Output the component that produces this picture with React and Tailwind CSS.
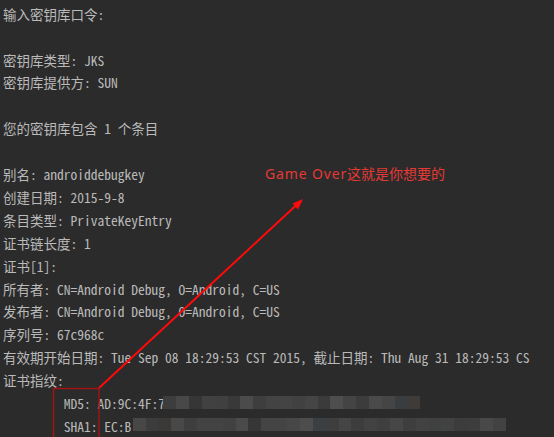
import React from "react";

const lines = [
  "输入密钥库口令:",
  "",
  "密钥库类型: JKS",
  "密钥库提供方: SUN",
  "",
  "您的密钥库包含 1 个条目",
  "",
  "别名: androiddebugkey",
  "创建日期: 2015-9-8",
  "条目类型: PrivateKeyEntry",
  "证书链长度: 1",
  "证书[1]:",
  "所有者: CN=Android Debug, O=Android, C=US",
  "发布者: CN=Android Debug, O=Android, C=US",
  "序列号: 67c968c",
  "有效期开始日期: Tue Sep 08 18:29:53 CST 2015, 截止日期: Thu Aug 31 18:29:53 CS",
  "证书指纹:",
];

const row1 = [
  "bg-[#3d3d3d]", "bg-[#484848]", "bg-[#363636]", "bg-[#414141]", "bg-[#404040]",
  "bg-[#393939]", "bg-[#4b4b4b]", "bg-[#3e3e3e]", "bg-[#434343]", "bg-[#444444]",
  "bg-[#414141]", "bg-[#454545]", "bg-[#3b3b3b]", "bg-[#4e4e4e]", "bg-[#444444]",
  "bg-[#3c3c3c]", "bg-[#4a4a4a]", "bg-[#454545]", "bg-[#3a3d40]", "bg-[#3f3b38]",
];

const row2 = [
  "bg-[#474747]", "bg-[#3c3c3c]", "bg-[#3a3937]", "bg-[#484848]", "bg-[#3e3e3e]",
  "bg-[#434343]", "bg-[#434343]", "bg-[#414141]", "bg-[#4a4a4a]", "bg-[#363636]",
  "bg-[#444444]", "bg-[#444444]", "bg-[#474747]", "bg-[#4d4d4d]", "bg-[#3b3e42]",
  "bg-[#3e3e3e]", "bg-[#454545]", "bg-[#3d3d3d]", "bg-[#424242]", "bg-[#3f3f3f]",
  "bg-[#464646]", "bg-[#3e3e3e]", "bg-[#424242]", "bg-[#404040]", "bg-[#404244]",
  "bg-[#3c3c3c]", "bg-[#3d3d3d]", "bg-[#484848]", "bg-[#424242]",
];

function Mosaic({ blocks }) {
  return (
    <span className="inline-flex h-[13px] align-middle -translate-y-[1px]">
      {blocks.map((c, i) => (
        <span key={i} className={`block h-full w-[12.87px] ${c}`} />
      ))}
    </span>
  );
}

function Line({ children }) {
  return (
    <div className="flex h-[22.9px] items-center whitespace-pre">{children}</div>
  );
}

export default function App() {
  return (
    <div className="relative h-[437px] w-[554px] overflow-hidden bg-[#2b2b2b]">
      <div className="pl-[3px] pt-[2.5px] font-['Noto_Sans_CJK_SC',sans-serif] text-[13.5px] text-[#bababa] [font-feature-settings:'hwid']">
        {lines.map((l, i) => (
          <Line key={i}>{l}</Line>
        ))}
        <Line>
          {"         MD5: AD:9C:4F:"}
          <span className="inline-block w-[5px] overflow-hidden">7</span>
          <Mosaic blocks={row1} />
        </Line>
        <Line>
          {"         SHA1: EC:B"}
          <span className="inline-block w-[1.5px]" />
          <Mosaic blocks={row2} />
        </Line>
      </div>

      <div className="absolute left-[265px] top-[162px] text-[14px] leading-[22px] text-[#e53935]">
        <span className="font-['Noto_Sans',sans-serif] tracking-[0.85px]">Game Over</span>
        <span className="font-['Noto_Sans_CJK_SC',sans-serif]">这就是你想要的</span>
      </div>

      <svg
        className="pointer-events-none absolute left-0 top-0"
        width="554"
        height="437"
        viewBox="0 0 554 437"
      >
        <rect x="53.5" y="388.5" width="45.5" height="60" fill="none" stroke="#a01414" strokeWidth="1.5" />
        <line x1="99" y1="388" x2="297" y2="204.5" stroke="#ff0a0a" strokeWidth="2" />
        <polygon points="303,199 292.5,203.5 298,209.5" fill="#ff0a0a" />
      </svg>
    </div>
  );
}
